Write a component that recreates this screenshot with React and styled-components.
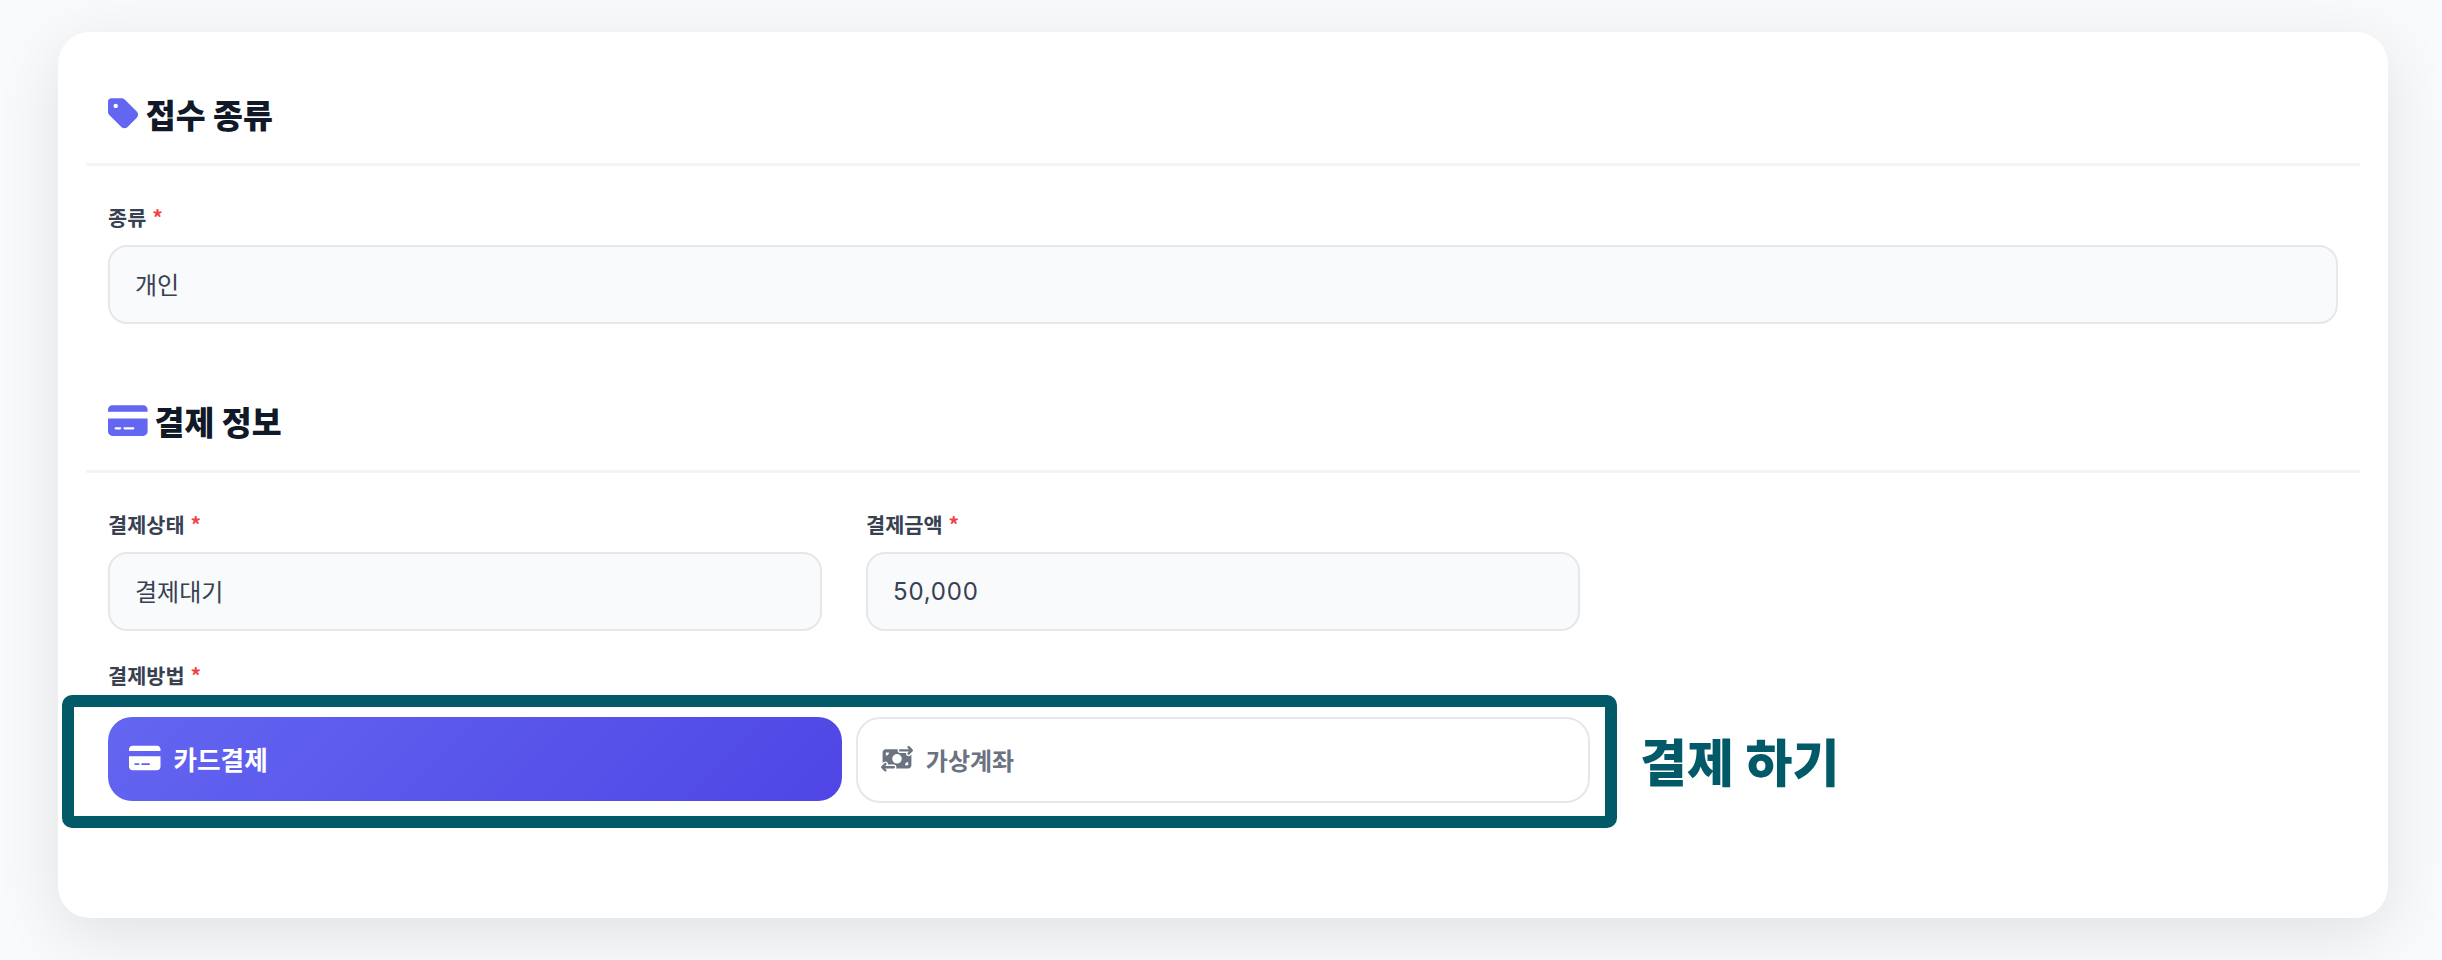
import React from "react";
import styled, { createGlobalStyle } from "styled-components";
import { FaTag, FaCreditCard, FaMoneyBillTransfer } from "react-icons/fa6";

const Global = createGlobalStyle`
  html, body { margin: 0; padding: 0; background: #f9fafb; }
  body { font-family: Inter, "Noto Sans CJK KR", sans-serif; }
`;

const Page = styled.div`
  width: 2442px;
  height: 960px;
  padding: 32px 54px 42px 58px;
  box-sizing: border-box;
  overflow: hidden;
`;

const Card = styled.main`
  height: 886px;
  box-sizing: border-box;
  padding: 59px 28px 0 28px;
  background: #fff;
  border-radius: 32px;
  box-shadow: 0 16px 64px rgba(0, 0, 0, 0.1);
`;

const Section = styled.section`
  & + & { margin-top: 74px; }
`;

const Heading = styled.h2`
  display: flex;
  align-items: center;
  gap: 7px;
  margin: 0 0 37px;
  padding: 0 22px 26px;
  height: 46px;
  box-sizing: content-box;
  border-bottom: 3px solid #f3f4f6;
  font-family: "Noto Sans CJK KR", sans-serif;
  font-size: 32.5px;
  line-height: 46px;
  font-weight: 800;
  color: #111827;
  svg { color: #6366f1; font-size: 35.2px; flex: none; }
`;

const TagIcon = styled(FaTag)`
  width: 0.875em;
  height: 1em;
`;

const CardIcon = styled(FaCreditCard)`
  width: 1.125em;
  height: 1em;
`;

const BillIcon = styled(FaMoneyBillTransfer)`
  width: 1.25em;
  height: 1em;
`;

const Fields = styled.div`
  padding: 0 22px;
  display: grid;
  grid-template-columns: ${(p) => (p.$columns === 3 ? "repeat(3, 1fr)" : "1fr")};
  column-gap: 44px;
`;

const Field = styled.div``;

const Label = styled.label`
  display: block;
  margin: -1px 0 13px;
  font-family: "Noto Sans CJK KR", sans-serif;
  font-size: 20.8px;
  line-height: 30px;
  font-weight: 600;
  color: #374151;
`;

const Required = styled.span`
  margin-left: 6px;
  font-weight: 700;
  color: #ef4444;
`;

const Value = styled.div`
  height: 79px;
  box-sizing: border-box;
  padding: 0 25px ${(p) => (p.$numeric ? "0" : "2px")};
  display: flex;
  align-items: center;
  background: #f9fafb;
  border: 2.4px solid #e5e7eb;
  border-radius: 19px;
  font-family: Inter, "Noto Sans CJK KR", sans-serif;
  font-size: 24px;
  letter-spacing: ${(p) => (p.$numeric ? "0.8px" : "0")};
  color: #374151;
`;

const MethodBlock = styled.div`
  padding: 30px 22px 0;
  ${Label} { margin-bottom: 27px; }
`;

const Methods = styled.div`
  position: relative;
  width: 1482px;
  display: grid;
  grid-template-columns: 1fr 1fr;
  column-gap: 13.6px;
`;

const Method = styled.div`
  height: ${(p) => (p.$active ? "84px" : "86px")};
  box-sizing: border-box;
  padding: 0 ${(p) => (p.$active ? "21px" : "23px")} 2px;
  display: flex;
  align-items: center;
  gap: 13px;
  border-radius: 24px;
  font-family: "Noto Sans CJK KR", sans-serif;
  font-size: ${(p) => (p.$active ? "25.6px" : "24px")};
  font-weight: ${(p) => (p.$active ? 700 : 600)};
  color: ${(p) => (p.$active ? "#fff" : "#6b7280")};
  background: ${(p) => (p.$active ? "linear-gradient(135deg, #6366f1, #4f46e5)" : "#fff")};
  border: ${(p) => (p.$active ? "none" : "2.4px solid #e5e7eb")};
  svg { font-size: ${(p) => (p.$active ? "28px" : "25.6px")}; flex: none; }
`;

const Highlight = styled.div`
  position: absolute;
  left: -46px;
  top: -22px;
  width: 1555px;
  height: 133px;
  box-sizing: border-box;
  border: 12px solid #025a68;
  border-radius: 10px;
  pointer-events: none;
`;

const Note = styled.div`
  position: absolute;
  left: 1532px;
  top: 9px;
  white-space: nowrap;
  font-family: "Noto Sans CJK KR", sans-serif;
  font-size: 51px;
  line-height: 68px;
  font-weight: 900;
  color: #025a68;
`;

export default function App() {
  return (
    <Page>
      <Global />
      <Card>
        <Section>
          <Heading><TagIcon />접수 종류</Heading>
          <Fields>
            <Field>
              <Label>종류<Required>*</Required></Label>
              <Value>개인</Value>
            </Field>
          </Fields>
        </Section>
        <Section>
          <Heading><CardIcon />결제 정보</Heading>
          <Fields $columns={3}>
            <Field>
              <Label>결제상태<Required>*</Required></Label>
              <Value>결제대기</Value>
            </Field>
            <Field>
              <Label>결제금액<Required>*</Required></Label>
              <Value $numeric>50,000</Value>
            </Field>
          </Fields>
          <MethodBlock>
            <Label>결제방법<Required>*</Required></Label>
            <Methods>
              <Method $active><CardIcon />카드결제</Method>
              <Method><BillIcon />가상계좌</Method>
              <Highlight />
              <Note>결제 하기</Note>
            </Methods>
          </MethodBlock>
        </Section>
      </Card>
    </Page>
  );
}
